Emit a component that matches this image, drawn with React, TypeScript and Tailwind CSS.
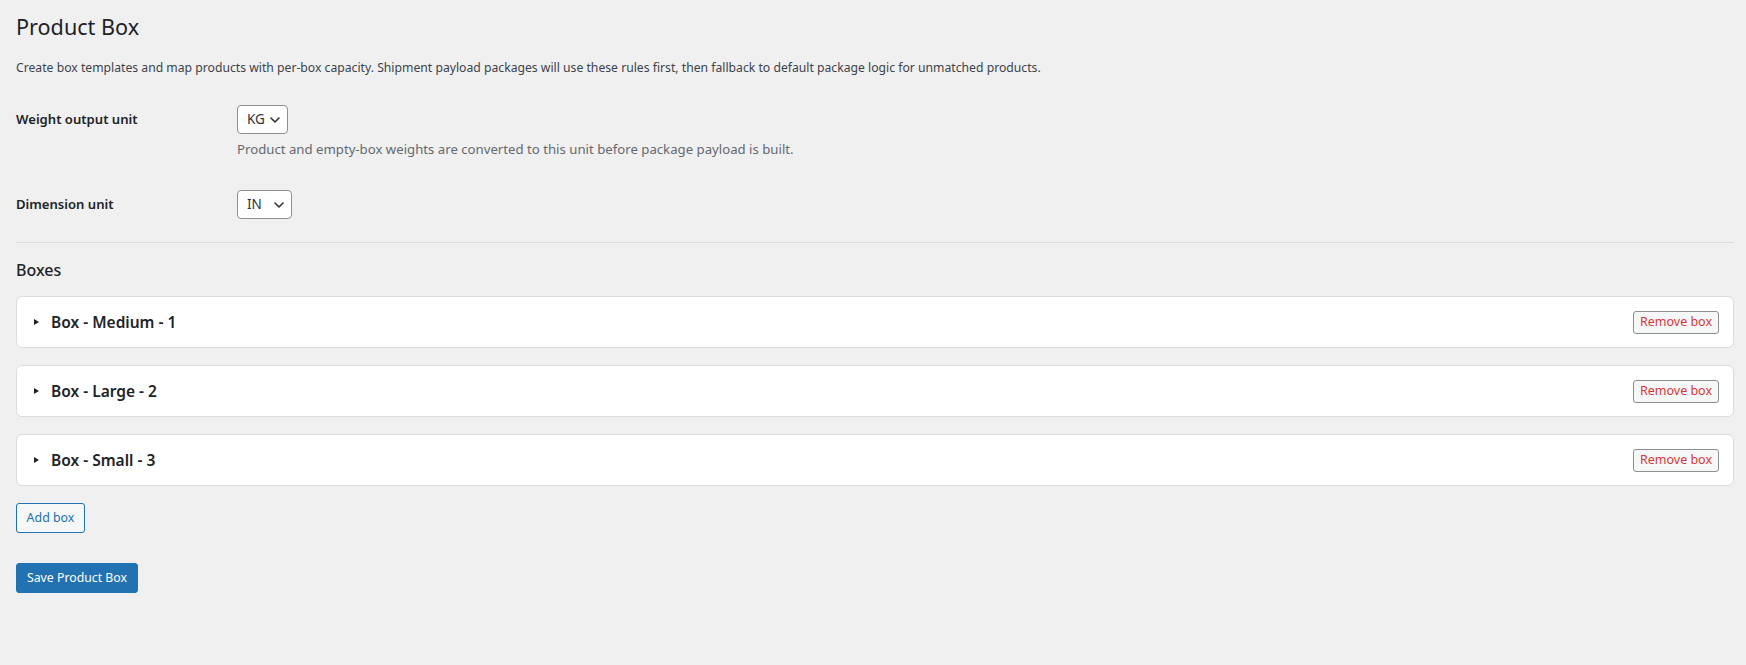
const boxes = ["Box - Medium - 1", "Box - Large - 2", "Box - Small - 3"];

function UnitSelect({ value, width }: { value: string; width: string }) {
  return (
    <div
      className={`flex h-[29px] ${width} items-center justify-between rounded-[4px] border border-[#8c8f94] bg-white pl-[9px] pr-[7px] text-[13.5px] text-[#2c3338]`}
    >
      <span>{value}</span>
      <svg width="10" height="6" viewBox="0 0 10 6" fill="none" className="stroke-[#2c3338]">
        <polyline points="1,1 5,5 9,1" strokeWidth="1.6" strokeLinecap="round" strokeLinejoin="round" />
      </svg>
    </div>
  );
}

export default function App() {
  return (
    <main
      className="min-h-screen bg-[#f0f0f1] pl-[16px] pr-[12px] pt-[11px] text-[#1d2327]"
      style={{ fontFamily: '"Noto Sans", "Open Sans", sans-serif' }}
    >
      <h1 className="text-[21.6px] font-normal leading-[32px]">Product Box</h1>
      <p className="mt-[15px] text-[12.2px] leading-[20px] text-[#3c434a]">
        Create box templates and map products with per-box capacity. Shipment payload packages will use these rules first, then fallback to default package logic for unmatched products.
      </p>

      <div className="mt-[27px] flex">
        <div className="flex h-[29px] w-[221px] items-center text-[13.1px] font-semibold">Weight output unit</div>
        <div>
          <UnitSelect value="KG" width="w-[51px]" />
          <p className="mt-[5px] text-[13.2px] leading-[20px] text-[#646970]">
            Product and empty-box weights are converted to this unit before package payload is built.
          </p>
        </div>
      </div>

      <div className="mt-[31px] flex">
        <div className="flex h-[29px] w-[221px] items-center text-[13.1px] font-semibold">Dimension unit</div>
        <UnitSelect value="IN" width="w-[55px]" />
      </div>

      <div className="mt-[23px] h-px bg-[#dcdcde]" />

      <h2 className="mt-[15px] text-[16px] font-medium leading-[24px]">Boxes</h2>

      <div className="mt-[14px] flex flex-col gap-[17px]">
        {boxes.map((name) => (
          <div
            key={name}
            className="flex h-[52px] items-center justify-between rounded-[6px] border border-[#dcdcde] bg-white pl-[17px] pr-[14px]"
          >
            <div className="flex items-center">
              <svg width="5" height="6" viewBox="0 0 5 6" className="fill-[#1d2327]">
                <path d="M0 0 L5 3 L0 6 Z" />
              </svg>
              <span className="ml-[12px] pt-[2px] text-[15.5px] font-semibold">{name}</span>
            </div>
            <button className="h-[23px] w-[86px] rounded-[3px] border border-[#8c8f94] bg-[#f6f7f7] text-[12.5px] text-[#d63638]">
              Remove box
            </button>
          </div>
        ))}
      </div>

      <button className="mt-[17px] h-[30px] w-[69px] rounded-[3px] border border-[#2271b1] bg-[#f6f7f7] text-[12.4px] text-[#2271b1]">
        Add box
      </button>

      <div>
        <button className="mt-[30px] h-[30px] w-[122px] rounded-[3px] border border-[#2271b1] bg-[#2271b1] text-[12.3px] text-white">
          Save Product Box
        </button>
      </div>
    </main>
  );
}
